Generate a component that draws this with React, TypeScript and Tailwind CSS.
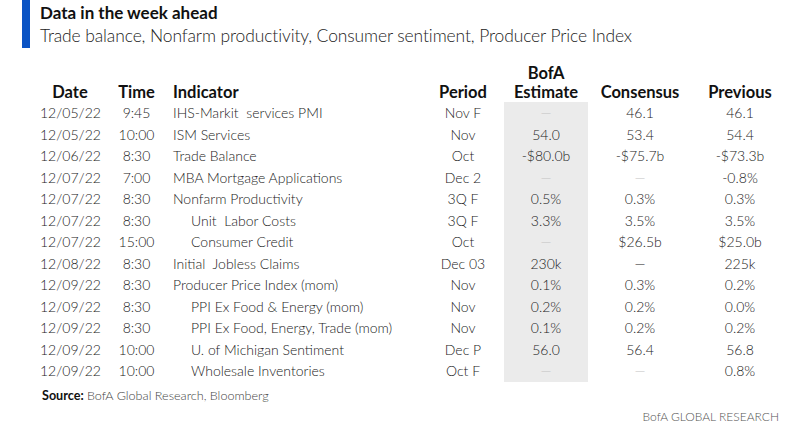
type Row = {
  date: string;
  time: string;
  indicator: string;
  indent?: boolean;
  period: string;
  est: string;
  cons: string;
  prev: string;
};

const rows: Row[] = [
  { date: "12/05/22", time: "9:45", indicator: "IHS-Markit  services PMI", period: "Nov F", est: "—", cons: "46.1", prev: "46.1" },
  { date: "12/05/22", time: "10:00", indicator: "ISM Services", period: "Nov", est: "54.0", cons: "53.4", prev: "54.4" },
  { date: "12/06/22", time: "8:30", indicator: "Trade Balance", period: "Oct", est: "-$80.0b", cons: "-$75.7b", prev: "-$73.3b" },
  { date: "12/07/22", time: "7:00", indicator: "MBA Mortgage Applications", period: "Dec 2", est: "—", cons: "—", prev: "-0.8%" },
  { date: "12/07/22", time: "8:30", indicator: "Nonfarm Productivity", period: "3Q F", est: "0.5%", cons: "0.3%", prev: "0.3%" },
  { date: "12/07/22", time: "8:30", indicator: "Unit  Labor Costs", indent: true, period: "3Q F", est: "3.3%", cons: "3.5%", prev: "3.5%" },
  { date: "12/07/22", time: "15:00", indicator: "Consumer Credit", indent: true, period: "Oct", est: "—", cons: "$26.5b", prev: "$25.0b" },
  { date: "12/08/22", time: "8:30", indicator: "Initial  Jobless Claims", period: "Dec 03", est: "230k", cons: "dark", prev: "225k" },
  { date: "12/09/22", time: "8:30", indicator: "Producer Price Index (mom)", period: "Nov", est: "0.1%", cons: "0.3%", prev: "0.2%" },
  { date: "12/09/22", time: "8:30", indicator: "PPI Ex Food & Energy (mom)", indent: true, period: "Nov", est: "0.2%", cons: "0.2%", prev: "0.0%" },
  { date: "12/09/22", time: "8:30", indicator: "PPI Ex Food, Energy, Trade (mom)", indent: true, period: "Nov", est: "0.1%", cons: "0.2%", prev: "0.2%" },
  { date: "12/09/22", time: "10:00", indicator: "U. of Michigan Sentiment", indent: true, period: "Dec P", est: "56.0", cons: "56.4", prev: "56.8" },
  { date: "12/09/22", time: "10:00", indicator: "Wholesale Inventories", indent: true, period: "Oct F", est: "—", cons: "—", prev: "0.8%" },
];

const cols = "grid grid-cols-[60px_73px_249px_82px_84px_104px_96px]";

const Cell = ({ v }: { v: string }) => {
  if (v === "—") return <span className="text-[#c4c4c4]">—</span>;
  if (v === "dark") return <span className="text-[#222]">—</span>;
  return <span>{v}</span>;
};

export default function App() {
  return (
    <div
      className="w-[797px] h-[429px] bg-white text-[#222] overflow-hidden relative"
      style={{ fontFamily: "Lato, 'Open Sans', sans-serif" }}
    >
      <div className="flex">
        <div className="ml-[22px] w-[8px] h-[48px] bg-[#0a53c4]" />
        <div className="ml-[10px] pt-[2px]">
          <div className="text-[17px] font-bold leading-[22px] text-[#111]">
            Data in the week ahead
          </div>
          <div className="text-[17.45px] font-light leading-[24px] text-[#222] tracking-[-0.1px]">
            Trade balance, Nonfarm productivity, Consumer sentiment, Producer Price Index
          </div>
        </div>
      </div>

      <div className="ml-[40px] mt-[12px]">
        <div className={`${cols} items-end text-[16.5px] font-bold leading-[19px] text-[#111] h-[42px]`}>
          <div className="text-center">Date</div>
          <div className="text-center">Time</div>
          <div>Indicator</div>
          <div className="text-center">Period</div>
          <div className="text-center">
            BofA
            <br />
            Estimate
          </div>
          <div className="text-center">Consensus</div>
          <div className="text-center">Previous</div>
        </div>
        <div className="relative">
          <div className={`${cols} absolute inset-0 pointer-events-none`}>
            <div />
            <div />
            <div />
            <div />
            <div className="bg-[#ebebeb]" />
          </div>
          <div className="relative text-[14px] font-light">
            {rows.map((r, i) => (
              <div key={i} className={`${cols} h-[21.5px] items-center`}>
                <div className="text-center">{r.date}</div>
                <div className="text-center">{r.time}</div>
                <div className={r.indent ? "pl-[18px] whitespace-pre" : "whitespace-pre"}>
                  {r.indicator}
                </div>
                <div className="text-center">{r.period}</div>
                <div className="text-center">
                  <Cell v={r.est} />
                </div>
                <div className="text-center">
                  <Cell v={r.cons} />
                </div>
                <div className="text-center">
                  <Cell v={r.prev} />
                </div>
              </div>
            ))}
          </div>
        </div>
        <div className="mt-[6px] ml-[2px] text-[12.6px] leading-[15px] text-[#444]">
          <span className="font-bold text-[#111]">Source:</span>{" "}
          <span className="font-light">BofA Global Research, Bloomberg</span>
        </div>
      </div>
      <div className="absolute right-[18px] bottom-[4px] text-[12px] leading-[16px] font-light text-[#555]">
        BofA GLOBAL RESEARCH
      </div>
    </div>
  );
}
